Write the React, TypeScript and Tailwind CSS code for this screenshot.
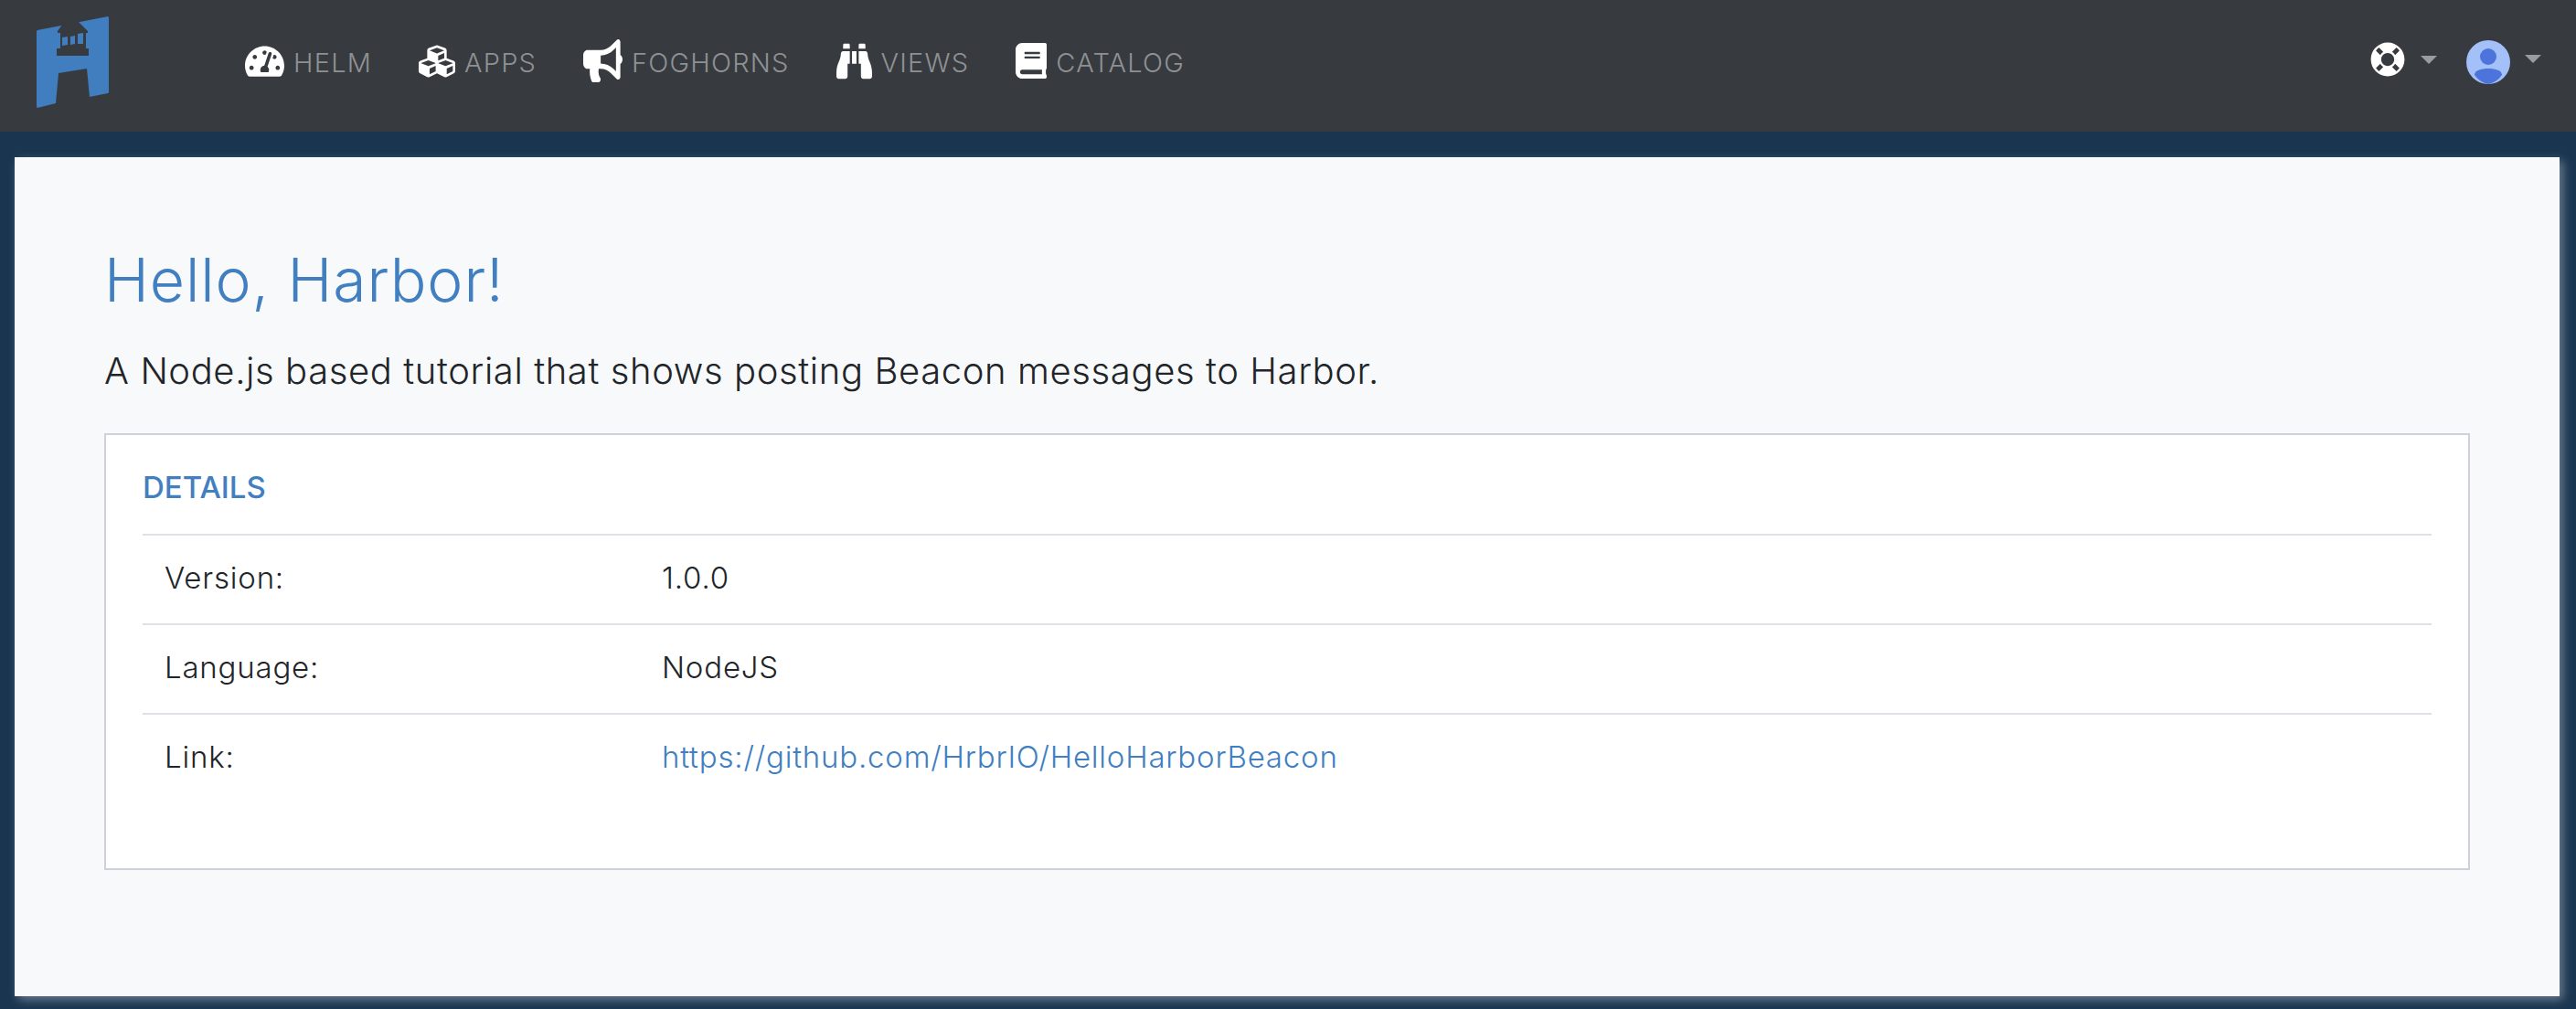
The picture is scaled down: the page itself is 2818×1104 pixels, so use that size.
import React from "react";
import { FaTachometerAlt, FaCubes, FaBullhorn, FaBinoculars, FaBook, FaLifeRing } from "react-icons/fa";

const navItems = [
  { label: "HELM", icon: FaTachometerAlt, iconClass: "w-[43px] h-[38px]" },
  { label: "APPS", icon: FaCubes, iconClass: "w-[40px] h-[40px]" },
  { label: "FOGHORNS", icon: FaBullhorn, iconClass: "w-[43px] h-[47px]" },
  { label: "VIEWS", icon: FaBinoculars, iconClass: "w-[39px] h-[44px]" },
  { label: "CATALOG", icon: FaBook, iconClass: "w-[34px] h-[39px]" },
];

const Logo = () => (
  <svg width="80" height="100" viewBox="0 0 80 100" className="block">
    <path fill="#417ebf" d="M1 15 L78 0 Q79 0 79 2 L79 83 Q79 84 78 84 L58 88 L55 57 L24 62 L21 95 L1 100 Q0 100 0 98 L0 16 Z" />
    {/* lighthouse */}
    <path fill="#373b3f" d="M23 16 L28 9 L27 7 L46 3 L45 5 L56 16 L56 18 L54 18 L54 35 L57 35 L57 43 L22 43 L22 35 L26 35 L26 18 L23 18 Z" />
    <path fill="#417ebf" d="M28 23 L34 22 L34 31 L28 32 Z M37 22 L42 21 L42 30 L37 31 Z M45 19 L51 18 L51 30 L45 30 Z" />
  </svg>
);

const Avatar = () => (
  <svg width="48" height="48" viewBox="0 0 48 48" className="block">
    <circle cx="24" cy="24" r="24" fill="#a3c0f9" />
    <circle cx="24" cy="18" r="9" fill="#4c74da" />
    <path fill="#4c74da" d="M9 38 C9 33 16 31 24 31 C32 31 39 33 39 38 A24 24 0 0 1 24 48 A24 24 0 0 1 9 38 Z" />
  </svg>
);

const Caret = () => (
  <span className="w-0 h-0 border-l-[9px] border-r-[9px] border-t-[9px] border-l-transparent border-r-transparent border-t-[#9a9da0]" />
);

const rows = [
  { name: "Version:", value: "1.0.0" },
  { name: "Language:", value: "NodeJS" },
  { name: "Link:", value: "https://github.com/HrbrIO/HelloHarborBeacon", link: true },
];

const App: React.FC = () => {
  return (
    <div className="h-[1104px] bg-[#1a3550] flex flex-col font-['Inter',sans-serif] overflow-hidden">
      {/* navbar */}
      <header className="h-[144px] bg-[#373b3f] flex items-center pl-[40px] pr-[38px] shrink-0">
        <div className="w-[228px] shrink-0 -mt-[8px]">
          <Logo />
        </div>
        <nav className="flex items-center gap-[51px] -mt-[6px]">
          {navItems.map((item) => {
            const Icon = item.icon;
            return (
              <a key={item.label} className="flex items-center gap-[10px] text-[#8e9194] text-[29px] tracking-[1.2px] font-light">
                <Icon preserveAspectRatio="none" className={`${item.iconClass} text-white -mt-[5px]`} />
                <span>{item.label}</span>
              </a>
            );
          })}
        </nav>
        <div className="ml-auto flex items-center -mt-[8px]">
          <FaLifeRing className="w-[38px] h-[38px] text-white -mt-[6px]" />
          <span className="ml-[17px] -mt-[6px] flex"><Caret /></span>
          <span className="ml-[32px]"><Avatar /></span>
          <span className="ml-[16px] -mt-[8px] flex"><Caret /></span>
        </div>
      </header>

      {/* main panel */}
      <main className="mt-[28px] ml-[16px] mr-[18px] h-[918px] bg-[#f8f9fa] px-[98px] pt-[98px] shadow-[4px_4px_10px_rgba(255,255,255,0.35)]">
        <h1 className="text-[#417fc1] text-[66px] leading-[72px] tracking-[0.9px] font-light">Hello, Harbor!</h1>
        <p className="mt-[39px] text-[#212529] text-[40px] leading-[50px] tracking-[0.6px] font-light">
          A Node.js based tutorial that shows posting Beacon messages to Harbor.
        </p>
        <section className="mt-[43px] h-[478px] bg-white border-2 border-[#d0d0d8] px-[40px]">
          <h2 className="h-[108px] pt-[8px] flex items-center text-[#417fc1] text-[33px] font-medium">DETAILS</h2>
          <table className="w-full border-collapse text-[#212529] text-[33px] tracking-[0.8px] font-light">
            <tbody>
              {rows.map((row) => (
                <tr key={row.name} className="h-[98px] border-t-2 border-[#dee2e6]">
                  <td className="w-[544px] pl-[24px] pb-[3px]">{row.name}</td>
                  <td className="pl-[24px] pb-[3px]">
                    {row.link ? <a className="text-[#417fc1]">{row.value}</a> : row.value}
                  </td>
                </tr>
              ))}
            </tbody>
          </table>
        </section>
      </main>
    </div>
  );
};

export default App;
